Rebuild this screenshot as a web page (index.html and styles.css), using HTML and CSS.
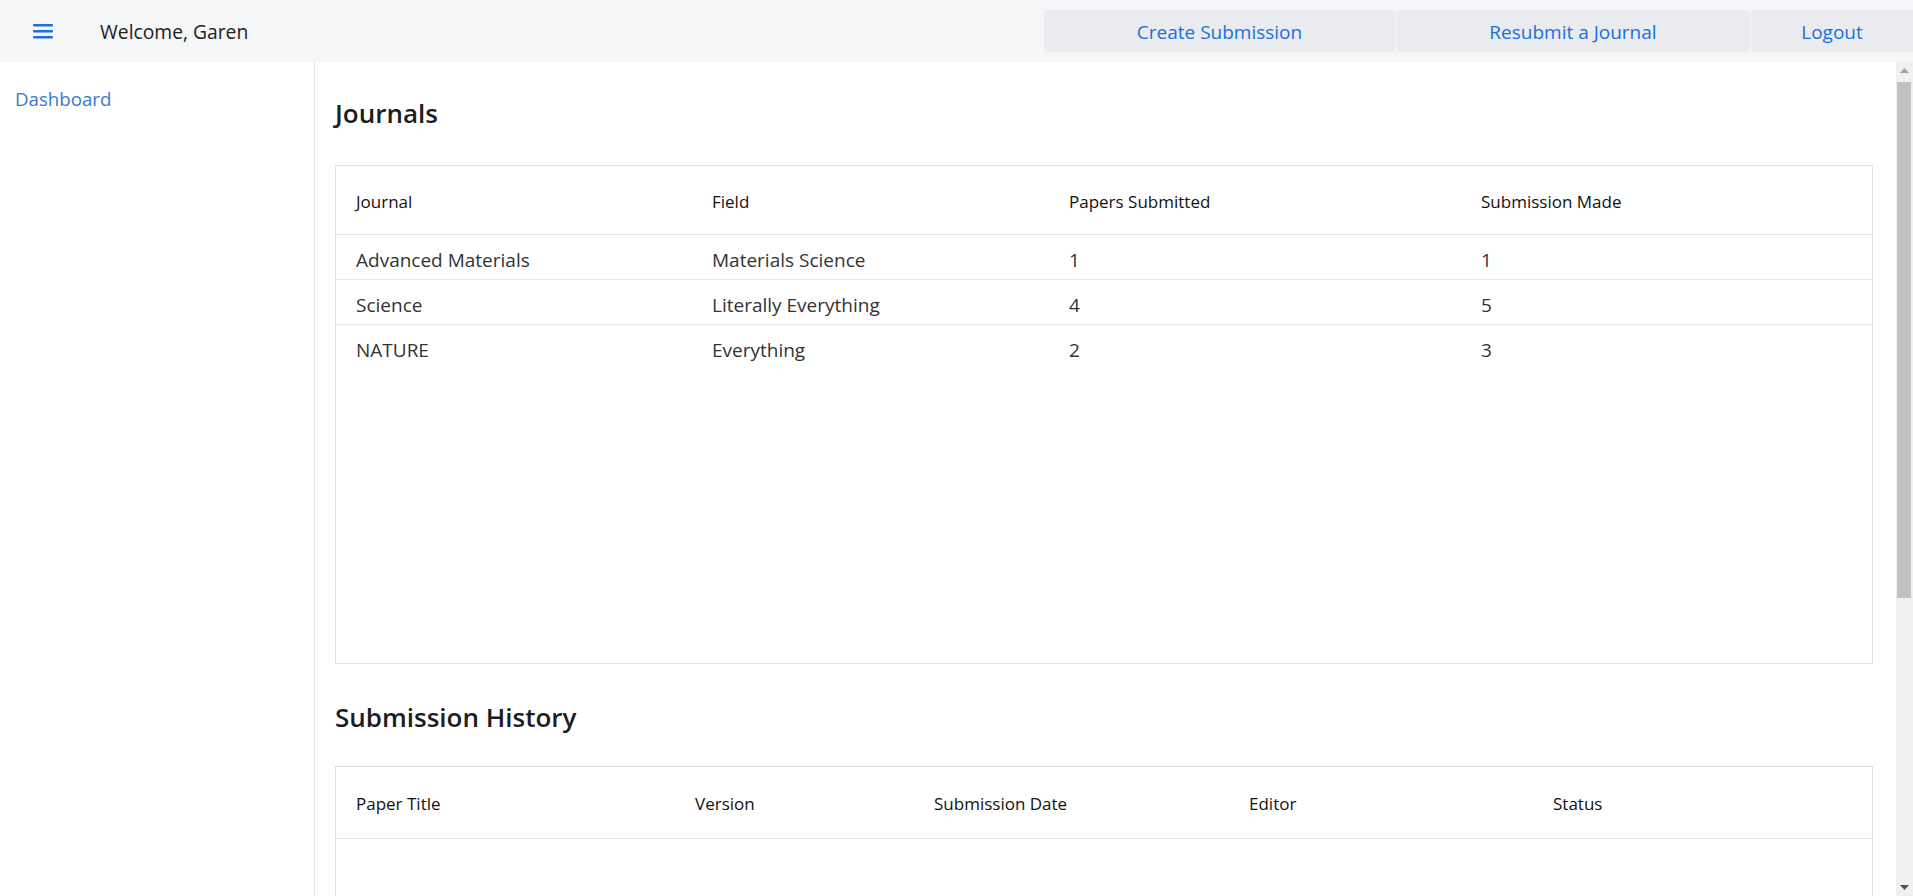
FILE: index.html
```html
<!DOCTYPE html>
<html lang="en">
<head>
<meta charset="utf-8">
<title>Dashboard</title>
<link rel="stylesheet" href="styles.css">
</head>
<body>
<header class="topbar">
  <div class="topbar-left">
    <button class="menu-btn" aria-label="Menu">
      <svg width="20" height="16" viewBox="0 0 20 16"><rect x="0" y="1" width="20" height="2.6" rx="1" fill="#1f6fe0"/><rect x="0" y="7" width="20" height="2.6" rx="1" fill="#1f6fe0"/><rect x="0" y="13" width="20" height="2.6" rx="1" fill="#1f6fe0"/></svg>
    </button>
    <span class="welcome">Welcome, Garen</span>
  </div>
  <nav class="topnav">
    <a class="navbtn nb1" href="#">Create Submission</a>
    <a class="navbtn nb2" href="#">Resubmit a Journal</a>
    <a class="navbtn nb3" href="#">Logout</a>
  </nav>
</header>
<div class="layout">
  <aside class="sidebar">
    <a class="side-link" href="#">Dashboard</a>
  </aside>
  <main class="main">
    <h2 class="section-title t1">Journals</h2>
    <div class="card">
      <table class="tbl">
        <colgroup><col class="c1"><col class="c2"><col class="c3"><col class="c4"></colgroup>
        <thead><tr><th>Journal</th><th>Field</th><th>Papers Submitted</th><th>Submission Made</th></tr></thead>
        <tbody>
          <tr><td>Advanced Materials</td><td>Materials Science</td><td>1</td><td>1</td></tr>
          <tr><td>Science</td><td>Literally Everything</td><td>4</td><td>5</td></tr>
          <tr class="last"><td>NATURE</td><td>Everything</td><td>2</td><td>3</td></tr>
        </tbody>
      </table>
    </div>
    <h2 class="section-title t2">Submission History</h2>
    <div class="card">
      <table class="tbl tbl2">
        <colgroup><col class="d1"><col class="d2"><col class="d3"><col class="d4"><col class="d5"></colgroup>
        <thead><tr><th>Paper Title</th><th>Version</th><th>Submission Date</th><th>Editor</th><th>Status</th></tr></thead>
        <tbody></tbody>
      </table>
    </div>
  </main>
  <div class="scrollbar" aria-hidden="true">
    <div class="sb-btn">
      <svg width="9" height="5" viewBox="0 0 9 5"><polygon points="0,5 4.5,0 9,5" fill="#a3a3a3"/></svg>
    </div>
    <div class="sb-track"><div class="sb-thumb"></div></div>
    <div class="sb-btn">
      <svg width="9" height="5" viewBox="0 0 9 5"><polygon points="0,0 9,0 4.5,5" fill="#505050"/></svg>
    </div>
  </div>
</div>
</body>
</html>
```
FILE: styles.css
```css
* { box-sizing: border-box; }
html, body { margin: 0; height: 100%; }
body {
  font-family: "Open Sans", "Noto Sans", sans-serif;
  color: #212529;
  background: #fff;
  display: flex;
  flex-direction: column;
  overflow: hidden;
}
.topbar {
  height: 62px;
  flex: 0 0 62px;
  background: #f4f6f8;
  display: flex;
  align-items: center;
  justify-content: space-between;
}
.topbar-left { display: flex; align-items: center; }
.menu-btn {
  border: 0; background: transparent; padding: 0;
  margin-left: 33px; width: 20px; height: 16px;
  display: flex;
}
.welcome {
  margin-left: 47px;
  font-size: 19.3px;
  color: #222;
}
.topnav {
  display: flex;
  align-self: flex-start;
  margin-top: 10px;
  height: 42px;
}
.navbtn {
  display: flex; align-items: center; justify-content: center;
  background: #e9ebee;
  color: #1a6fe0;
  text-decoration: none;
  font-size: 19px;
  font-weight: 500;
  border-radius: 4px;
  margin-left: 1px;
  padding-top: 2px;
}
.nb1 { width: 351px; }
.nb2 { width: 354px; }
.nb3 { width: 162px; border-radius: 4px 0 0 4px; }
.layout {
  flex: 1;
  display: flex;
  min-height: 0;
}
.sidebar {
  width: 315px;
  flex: 0 0 315px;
  border-right: 1px solid #e4e4e4;
  padding: 24px 0 0 15px;
}
.side-link {
  color: #3a78d6;
  text-decoration: none;
  font-size: 18.7px;
}
.main {
  flex: 1;
  overflow: hidden;
  padding: 0 23px 60px 20px;
}
.scrollbar {
  width: 17px;
  flex: 0 0 17px;
  background: #f1f1f1;
  display: flex;
  flex-direction: column;
}
.sb-btn {
  height: 17px;
  flex: 0 0 17px;
  display: flex;
  align-items: center;
  justify-content: center;
}
.sb-track {
  flex: 1;
  padding: 3px 2px 0 1px;
}
.sb-thumb {
  height: 516px;
  background: #c1c1c1;
}
.section-title {
  margin: 0;
  font-size: 26px;
  font-weight: 600;
  color: #1d1d1f;
  line-height: 34px;
}
.t1 { padding-top: 34px; margin-bottom: 35px; }
.t2 { margin-top: 36px; margin-bottom: 32px; }
.card {
  border: 1px solid #dee2e6;
  height: 499px;
}
.tbl {
  width: 100%;
  border-collapse: collapse;
  table-layout: fixed;
}
.tbl th {
  text-align: left;
  font-weight: 500;
  font-size: 17px;
  color: #111;
  height: 68px;
  padding: 3px 20px 0;
  border-bottom: 1px solid #e3e5e8;
}
.tbl2 th { height: 71px; }
.tbl td {
  font-size: 19px;
  color: #333;
  height: 45px;
  padding: 7px 20px 0;
  border-bottom: 1px solid #e6e8eb;
  white-space: nowrap;
}
.tbl tr.last td { border-bottom: 0; }
.c1 { width: 356px; }
.c2 { width: 357px; }
.c3 { width: 412px; }
.d1 { width: 339px; }
.d2 { width: 239px; }
.d3 { width: 315px; }
.d4 { width: 304px; }
```
